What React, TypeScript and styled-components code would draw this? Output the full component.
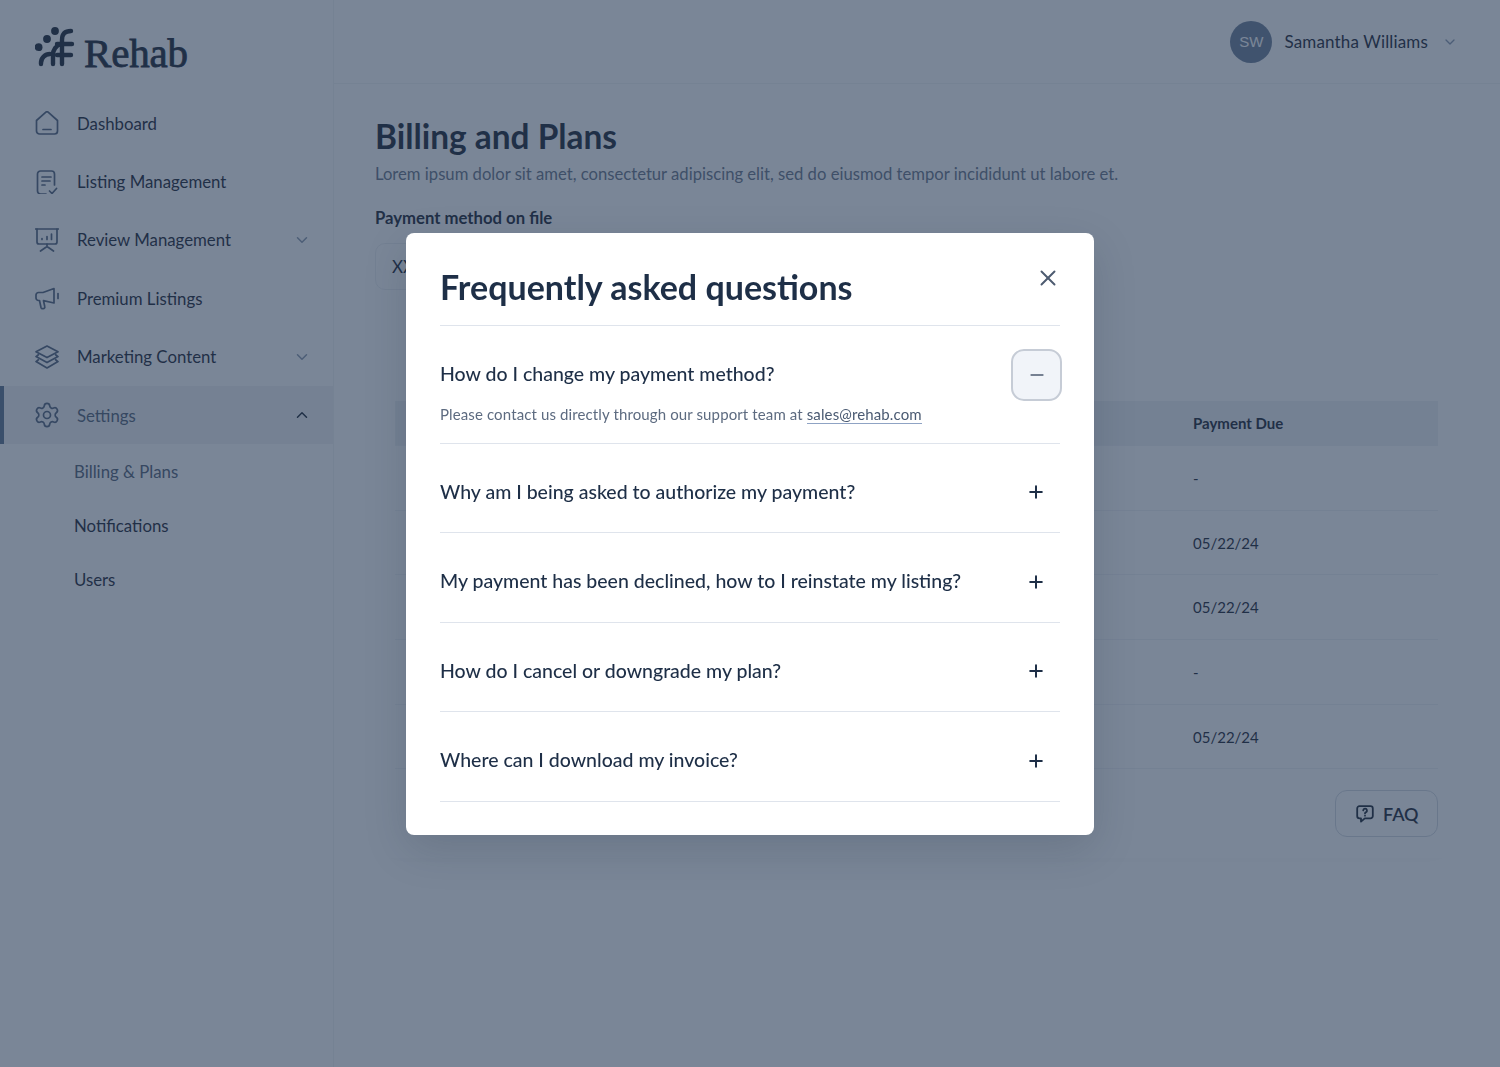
import { ReactNode } from "react";
import styled, { createGlobalStyle } from "styled-components";
import { ChevronDown, ChevronUp, Minus, Plus, Settings, X } from "lucide-react";

const GlobalStyle = createGlobalStyle`
  html, body {
    margin: 0;
    padding: 0;
    background: #fff;
    font-family: Lato, "Liberation Sans", sans-serif;
    color: #1f2937;
  }
  * { box-sizing: border-box; }
`;

const HomeIcon = () => (
  <svg width="24" height="24" viewBox="0 0 24 24" fill="none" stroke="currentColor" strokeWidth="1.7" strokeLinejoin="round" strokeLinecap="round">
    <path d="M1.5 9.5 10.6 1.4a2 2 0 0 1 2.8 0l9.1 8.1V20a3 3 0 0 1-3 3h-15a3 3 0 0 1-3-3z" />
    <path d="M8 18.5h8" />
  </svg>
);

const ListingIcon = () => (
  <svg width="24" height="24" viewBox="0 0 24 24" fill="none" stroke="currentColor" strokeWidth="1.7" strokeLinejoin="round" strokeLinecap="round">
    <path d="M11 24H5.5a3 3 0 0 1-3-3V4a3 3 0 0 1 3-3h11a3 3 0 0 1 3 3v11" />
    <path d="M7 7h9M7 11h8M7 15h3" />
    <path d="m14.5 21 2.5 2.5 4.5-5" />
  </svg>
);

const ReviewIcon = () => (
  <svg width="24" height="24" viewBox="0 0 24 24" fill="none" stroke="currentColor" strokeWidth="1.7" strokeLinejoin="round" strokeLinecap="round">
    <path d="M0 1h24" />
    <path d="M2 1v13a2 2 0 0 0 2 2h16a2 2 0 0 0 2-2V1" />
    <path d="M7 11.5v-1M12 11.5v-3M16.5 11.5V6" />
    <path d="M12 16v3M5.5 23l6.5-4.5 6.5 4.5" />
  </svg>
);

const MegaphoneIcon = () => (
  <svg width="24" height="24" viewBox="0 0 24 24" fill="none" stroke="currentColor" strokeWidth="1.7" strokeLinejoin="round" strokeLinecap="round">
    <path d="M19 2.5 8 6.5H3.5A2.5 2.5 0 0 0 1 9v3a2.5 2.5 0 0 0 2.5 2.5H4.5L6 21.5a1.6 1.6 0 0 0 1.6 1.2h.7a1.6 1.6 0 0 0 1.5-2l-1.3-6 10.5 2.3z" />
    <path d="M23 7.5v5" />
  </svg>
);

const LayersIcon = () => (
  <svg width="24" height="24" viewBox="0 0 24 24" fill="none" stroke="currentColor" strokeWidth="1.7" strokeLinejoin="round" strokeLinecap="round">
    <path d="M12 1 23 6.8 12 12.6 1 6.8z" />
    <path d="M3.4 9.8 1 11.6l11 6 11-6-2.4-1.8" />
    <path d="M3.4 14.8 1 16.6l11 6.4 11-6.4-2.4-1.8" />
  </svg>
);

const FaqIcon = () => (
  <svg width="18" height="18" viewBox="0 0 18 18" fill="none" stroke="currentColor" strokeWidth="1.8" strokeLinejoin="round" strokeLinecap="round">
    <path d="M3.5 1.2h11a2.3 2.3 0 0 1 2.3 2.3v7.6a2.3 2.3 0 0 1-2.3 2.3H8.8L5 16.6v-3.2H3.5a2.3 2.3 0 0 1-2.3-2.3V3.5a2.3 2.3 0 0 1 2.3-2.3z" />
    <path d="M7.2 5.4a1.9 1.9 0 1 1 2.6 1.9c-.5.3-.8.6-.8 1.1" />
    <path d="M9 10.7h.01" />
  </svg>
);

const LogoMark = () => (
  <svg width="40" height="40" viewBox="0 0 40 40" fill="currentColor">
    <circle cx="20" cy="4" r="3.9" />
    <circle cx="12" cy="12" r="3.9" />
    <circle cx="3.6" cy="20.2" r="3.9" />
    <g fill="none" stroke="currentColor" strokeWidth="4.4" strokeLinecap="round">
      <path d="M6 37v-1a9 9 0 0 1 9-9" />
      <path d="M18 37v-9a11 11 0 0 1 8-11" />
      <path d="M27 37V13c0-6 3-9 9-9" />
      <path d="M22 17h15M22 28h14" />
    </g>
  </svg>
);

const Layout = styled.div`
  display: flex;
  width: 100%;
  height: 1067px;
  overflow: hidden;
`;

const Sidebar = styled.aside`
  width: 334px;
  flex-shrink: 0;
  border-right: 1px solid #f3f4f6;
`;

const Brand = styled.div`
  display: flex;
  align-items: center;
  gap: 9px;
  height: 94px;
  padding: 0 0 0 35px;
  color: #1f2937;
`;

const BrandName = styled.span`
  font-family: "Liberation Serif", serif;
  font-size: 41px;
  font-weight: 400;
  letter-spacing: -0.2px;
  padding-top: 11px;
  -webkit-text-stroke: 0.8px currentColor;
`;

const NavRow = styled.div<{ $active?: boolean }>`
  display: flex;
  align-items: center;
  height: 58.4px;
  padding-left: ${({ $active }) => ($active ? "31px" : "35px")};
  padding-right: 22px;
  font-size: 16.8px;
  gap: 18px;
  background: ${({ $active }) => ($active ? "#f2f3f6" : "transparent")};
  border-left: ${({ $active }) => ($active ? "4px solid #5f7592" : "none")};
  color: ${({ $active }) => ($active ? "#566479" : "#1f2937")};
`;

const NavIcon = styled.span`
  display: flex;
  align-items: center;
  justify-content: center;
  width: 24px;
  height: 24px;
  color: #55657e;
`;

const NavLabel = styled.span`
  flex: 1;
`;

const NavChevron = styled.span<{ $strong?: boolean }>`
  display: flex;
  color: ${({ $strong }) => ($strong ? "#1f2937" : "#8d9aae")};
`;

const SubNav = styled.div`
  display: flex;
  flex-direction: column;
  padding-left: 74px;
`;

const SubItem = styled.div<{ $muted?: boolean }>`
  display: flex;
  align-items: center;
  height: 54px;
  font-size: 16.8px;
  color: ${({ $muted }) => ($muted ? "#566479" : "#1f2937")};
`;

const Content = styled.div`
  flex: 1;
  min-width: 0;
`;

const Topbar = styled.header`
  display: flex;
  align-items: center;
  justify-content: flex-end;
  height: 84px;
  padding-right: 42px;
  border-bottom: 1px solid #f3f4f6;
`;

const Avatar = styled.div`
  display: flex;
  align-items: center;
  justify-content: center;
  width: 42px;
  height: 42px;
  border-radius: 50%;
  background: #6f8099;
  color: #fff;
  font-family: "Liberation Sans", sans-serif;
  font-size: 15px;
  margin-right: 12px;
`;

const UserName = styled.span`
  font-size: 17px;
  letter-spacing: 0.15px;
  color: #1f2937;
  margin-right: 14px;
`;

const Main = styled.main`
  padding: 30px 42px 0 41px;
`;

const PageTitle = styled.h1`
  margin: 0;
  font-size: 33.4px;
  line-height: 44px;
  font-weight: 700;
  color: #1f2937;
`;

const PageLead = styled.p`
  margin: 4px 0 0;
  font-size: 16.65px;
  line-height: 24px;
  color: #6b778a;
`;

const FieldLabel = styled.div`
  margin-top: 20px;
  font-size: 16.7px;
  line-height: 24px;
  font-weight: 700;
  color: #1f2937;
`;

const CardField = styled.div`
  display: flex;
  align-items: center;
  width: 400px;
  height: 47px;
  margin-top: 13px;
  padding-left: 16px;
  border: 1px solid #eef0f3;
  border-radius: 10px;
  font-size: 17px;
  color: #1f2937;
`;

const HistoryCard = styled.section`
  display: flex;
  flex-direction: column;
  height: 548px;
  margin-top: 20px;
  padding: 91px 20px 0;
  border-radius: 12px;
  box-shadow: 0 4px 30px rgba(30, 41, 59, 0.015);
`;

const TableRow = styled.div<{ $head?: boolean }>`
  display: grid;
  grid-template-columns: 1fr 245px;
  align-items: center;
  height: ${({ $head }) => ($head ? "45px" : "64.7px")};
  background: ${({ $head }) => ($head ? "#f0f2f5" : "transparent")};
  border-bottom: 1px solid #f1f3f6;
  font-size: 15px;
  font-weight: ${({ $head }) => ($head ? 700 : 400)};
  color: #1f2937;
`;

const FaqRow = styled.div`
  display: flex;
  justify-content: flex-end;
  margin-top: 21px;
`;

const FaqButton = styled.button`
  display: flex;
  align-items: center;
  gap: 9px;
  width: 103px;
  height: 47px;
  padding-left: 20px;
  background: transparent;
  border: 1px solid #d5dae2;
  border-radius: 12px;
  font-family: inherit;
  font-size: 18px;
  font-weight: 600;
  color: #1f2937;
`;

const Overlay = styled.div`
  position: fixed;
  inset: 0;
  display: flex;
  align-items: center;
  justify-content: center;
  background: rgba(33, 53, 82, 0.6);
`;

const Modal = styled.div`
  position: relative;
  width: 688px;
  height: 602px;
  padding: 0 34px;
  background: #fff;
  border-radius: 8px;
  box-shadow: 0 14px 44px rgba(20, 30, 50, 0.16);
`;

const ModalTitle = styled.h2`
  display: flex;
  align-items: center;
  height: 93.5px;
  margin: 0;
  padding-top: 16px;
  border-bottom: 1px solid #dfe4ec;
  font-size: 34px;
  font-weight: 700;
  color: #1e2f47;
`;

const CloseButton = styled.button`
  position: absolute;
  top: 32px;
  right: 33px;
  display: flex;
  padding: 0;
  background: none;
  border: none;
  color: #4d5b70;
`;

const Item = styled.div`
  padding: 22.5px 0 14px;
  border-bottom: 1px solid #dfe4ec;
`;

const Question = styled.div`
  display: flex;
  align-items: center;
  justify-content: space-between;
  height: 52px;
  font-size: 19.5px;
  font-weight: 500;
  color: #1e2f47;
`;

const QuestionText = styled.span`
  margin-bottom: 2px;
`;

const Toggle = styled.button<{ $open?: boolean }>`
  display: flex;
  align-items: center;
  justify-content: center;
  width: ${({ $open }) => ($open ? "51px" : "52px")};
  height: 52px;
  margin-right: -2px;
  padding: 0;
  background: ${({ $open }) => ($open ? "#f1f4f9" : "transparent")};
  border: ${({ $open }) => ($open ? "2px solid #c6ccd6" : "none")};
  border-radius: 13px;
  color: ${({ $open }) => ($open ? "#4d5b70" : "#1e2f47")};
`;

const Answer = styled.p`
  margin: 1px 0 3px;
  font-size: 15px;
  line-height: 24px;
  letter-spacing: 0.12px;
  color: #5d6b80;
`;

const MailLink = styled.a`
  color: #4a5a72;
  text-decoration: none;
  border-bottom: 1px solid #8fa3c4;
`;

const navItems: { label: string; icon: ReactNode; chevron?: boolean }[] = [
  { label: "Dashboard", icon: <HomeIcon /> },
  { label: "Listing Management", icon: <ListingIcon /> },
  { label: "Review Management", icon: <ReviewIcon />, chevron: true },
  { label: "Premium Listings", icon: <MegaphoneIcon /> },
  { label: "Marketing Content", icon: <LayersIcon />, chevron: true },
];

const dueDates = ["-", "05/22/24", "05/22/24", "-", "05/22/24"];

const questions = [
  "Why am I being asked to authorize my payment?",
  "My payment has been declined, how to I reinstate my listing?",
  "How do I cancel or downgrade my plan?",
  "Where can I download my invoice?",
];

const App = () => {
  return (
    <>
      <GlobalStyle />
      <Layout>
        <Sidebar>
          <Brand>
            <LogoMark />
            <BrandName>Rehab</BrandName>
          </Brand>
          {navItems.map((item) => (
            <NavRow key={item.label}>
              <NavIcon>{item.icon}</NavIcon>
              <NavLabel>{item.label}</NavLabel>
              {item.chevron && (
                <NavChevron>
                  <ChevronDown size={18} />
                </NavChevron>
              )}
            </NavRow>
          ))}
          <NavRow $active>
            <NavIcon>
              <Settings size={28} strokeWidth={1.45} style={{ flexShrink: 0 }} />
            </NavIcon>
            <NavLabel>Settings</NavLabel>
            <NavChevron $strong>
              <ChevronUp size={18} />
            </NavChevron>
          </NavRow>
          <SubNav>
            <SubItem $muted>Billing &amp; Plans</SubItem>
            <SubItem>Notifications</SubItem>
            <SubItem>Users</SubItem>
          </SubNav>
        </Sidebar>
        <Content>
          <Topbar>
            <Avatar>SW</Avatar>
            <UserName>Samantha Williams</UserName>
            <NavChevron>
              <ChevronDown size={16} />
            </NavChevron>
          </Topbar>
          <Main>
            <PageTitle>Billing and Plans</PageTitle>
            <PageLead>Lorem ipsum dolor sit amet, consectetur adipiscing elit, sed do eiusmod tempor incididunt ut labore et.</PageLead>
            <FieldLabel>Payment method on file</FieldLabel>
            <CardField>XXXX</CardField>
            <HistoryCard>
              <TableRow $head>
                <span />
                <span>Payment Due</span>
              </TableRow>
              {dueDates.map((due, index) => (
                <TableRow key={index}>
                  <span />
                  <span>{due}</span>
                </TableRow>
              ))}
              <FaqRow>
                <FaqButton>
                  <FaqIcon />
                  FAQ
                </FaqButton>
              </FaqRow>
            </HistoryCard>
          </Main>
        </Content>
      </Layout>
      <Overlay>
        <Modal>
          <ModalTitle>Frequently asked questions</ModalTitle>
          <CloseButton>
            <X size={26} strokeWidth={1.8} />
          </CloseButton>
          <Item>
            <Question>
              <QuestionText>How do I change my payment method?</QuestionText>
              <Toggle $open>
                <Minus size={20} strokeWidth={2} />
              </Toggle>
            </Question>
            <Answer>
              Please contact us directly through our support team at <MailLink href="#">sales@rehab.com</MailLink>
            </Answer>
          </Item>
          {questions.map((question) => (
            <Item key={question}>
              <Question>
                <QuestionText>{question}</QuestionText>
                <Toggle>
                  <Plus size={20} strokeWidth={2.4} />
                </Toggle>
              </Question>
            </Item>
          ))}
        </Modal>
      </Overlay>
    </>
  );
};

export default App;
